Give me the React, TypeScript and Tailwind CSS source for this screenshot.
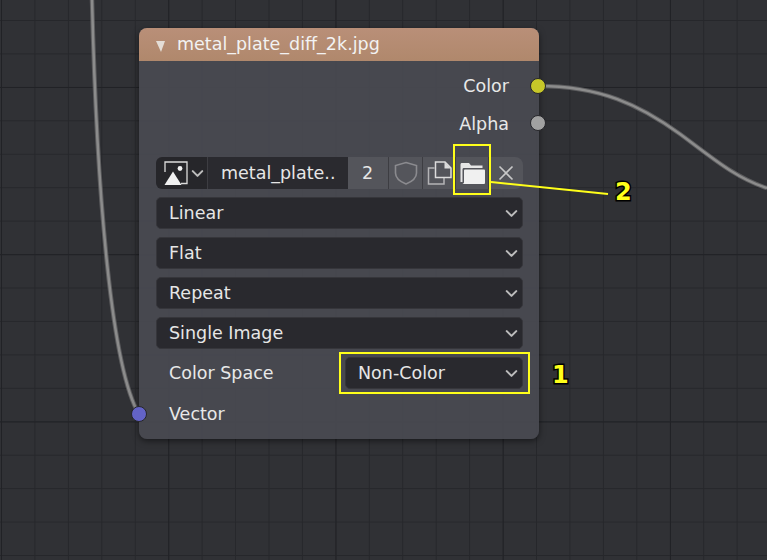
// Blender image texture node with annotation callouts

import { ChevronDown } from "lucide-react"

const selectRows = ["Linear", "Flat", "Repeat", "Single Image"]

function Chevron() {
  return <ChevronDown className="w-[19px] h-[19px] text-[#bdbdbd] shrink-0" strokeWidth={2.6} />
}

function SelectBox({ label }: { label: string }) {
  return (
    <div className="h-8 flex items-center justify-between pl-[12px] pr-[1px] bg-[#29292e] rounded-[5px] border border-[#36363b] text-[#e6e6e6]">
      <span className="pt-[2px]">{label}</span>
      <Chevron />
    </div>
  )
}

function ImageIcon() {
  return (
    <svg className="shrink-0" width="24" height="24" viewBox="0 0 24 24" fill="none">
      <path d="M1 11V1H23V22.5H17" stroke="#dcdcdc" strokeWidth="1.3" />
      <path d="M0.5 24L9 10.5L17.5 24Z" fill="#f0f0f0" />
      <circle cx="16" cy="7.5" r="2.4" fill="#f0f0f0" />
    </svg>
  )
}

function ShieldIcon() {
  return (
    <svg width="24" height="24" viewBox="0 0 24 24" fill="none">
      <path d="M12 1.5L22.5 4.5V12C22.5 17.5 17 21 12 23C7 21 1.5 17.5 1.5 12V4.5Z" stroke="#8b8b8f" strokeWidth="1.6" />
    </svg>
  )
}

function CopyIcon() {
  return (
    <svg width="25" height="24" viewBox="0 0 25 24" fill="none">
      <path d="M7.5 7H1.5V23H17V17" stroke="#b4b4b6" strokeWidth="1.5" />
      <path d="M8.5 1H18L24 7V16.5H8.5Z" stroke="#dcdcdc" strokeWidth="1.5" />
      <path d="M17.5 1V7.5H24Z" fill="#dcdcdc" />
    </svg>
  )
}

function FolderIcon() {
  return (
    <svg width="25" height="22" viewBox="0 0 25 22" fill="none">
      <path d="M0.5 3C0.5 1.5 1 1 2 1H9L11 3.5H22.5V6H4C3 6 2.5 6.5 2.5 7.5V20H0.5Z" fill="#e6e6e6" />
      <path d="M5 7.5H24C24.5 7.5 25 8 25 8.5V20.5C25 21.5 24.5 22 24 22H2.5C3.5 21.5 4 21 4 20V8.5C4 8 4.5 7.5 5 7.5Z" fill="#f0f0f0" />
    </svg>
  )
}

function CloseIcon() {
  return (
    <svg width="16" height="16" viewBox="0 0 16 16" fill="none">
      <path d="M1.5 1.5L14.5 14.5M14.5 1.5L1.5 14.5" stroke="#c8c8c8" strokeWidth="1.6" />
    </svg>
  )
}

function Socket({ className }: { className: string }) {
  return <span className={`absolute w-[16px] h-[16px] rounded-full border border-[#26262a] ${className}`} />
}

function Wire({ d }: { d: string }) {
  return (
    <>
      <path d={d} stroke="#6f6f71" strokeWidth="4.5" opacity="0.7" />
      <path d={d} stroke="#8c8c8c" strokeWidth="2.5" />
    </>
  )
}

export default function App() {
  return (
    <div
      className="relative w-[767px] h-[560px] overflow-hidden bg-[#303135] bg-[linear-gradient(#212226_1px,transparent_1px),linear-gradient(90deg,#212226_1px,transparent_1px),linear-gradient(#26272b_1px,transparent_1px),linear-gradient(90deg,#26272b_1px,transparent_1px)] bg-[size:167.25px_167.25px,167.25px_167.25px,33.45px_33.45px,33.45px_33.45px] bg-[position:1px_87px,1px_87px,1px_20px,1px_20px] text-[17.5px] leading-none"
      style={{ fontFamily: '"DejaVu Sans", sans-serif' }}
    >
      {/* Wires */}
      <svg className="absolute inset-0" width="767" height="560" fill="none">
        <Wire d="M92 0C97 200 112 370 139 414" />
        <Wire d="M538 86C600 86 640 105 680 134C710 156 735 178 767 188" />
      </svg>

      {/* Node */}
      <div className="absolute left-[139px] top-[28px] w-[400px] h-[411px] rounded-[8px] bg-[#484950]/[0.96] shadow-[0_2px_6px_rgba(0,0,0,0.5)] text-[#e8e8e8]">
        <div className="h-[33px] flex items-center gap-[12px] pl-[17px] rounded-t-[8px] bg-[linear-gradient(#b98f78,#b0886c)] text-[#f2f2f2]">
          <span className="w-0 h-0 mt-[3px] border-l-[5px] border-r-[4px] border-t-[11px] border-l-transparent border-r-transparent border-t-[#e4ddd6]" />
          <span className="pt-[1px]">metal_plate_diff_2k.jpg</span>
        </div>

        <div className="flex flex-col pl-[17px] pr-[16px]">
          <div className="h-[38px] mt-[6px] pt-[2px] pr-[14px] flex items-center justify-end">Color</div>
          <div className="h-[38px] pt-[2px] pr-[14px] flex items-center justify-end">Alpha</div>

          {/* Image selector */}
          <div className="h-8 mt-[14px] flex items-stretch text-[#e6e6e6]">
            <div className="w-[52px] shrink-0 flex items-center pl-[8px] gap-0 bg-[#26262a] rounded-l-[6px] border-r border-[#3d3d42]">
              <ImageIcon />
              <Chevron />
            </div>
            <div className="w-[140px] shrink-0 flex items-center pl-[13px] pt-[2px] bg-[#2a2a2f]">metal_plate..</div>
            <div className="w-[40px] shrink-0 flex items-center justify-center pt-[2px] pr-[1px] bg-[#54555b]">2</div>
            <div className="w-[34px] shrink-0 flex items-center justify-center bg-[#54555b] border-l border-[#3d3d42]"><ShieldIcon /></div>
            <div className="w-[33px] shrink-0 flex items-center justify-center bg-[#54555b] border-l border-[#3d3d42]"><CopyIcon /></div>
            <div className="w-[33px] shrink-0 flex items-center justify-center bg-[#54555b] border-l border-[#3d3d42]"><FolderIcon /></div>
            <div className="w-[35px] shrink-0 flex items-center justify-center bg-[#54555b] border-l border-[#3d3d42] rounded-r-[8px]"><CloseIcon /></div>
          </div>

          <div className="mt-2 flex flex-col gap-2">
            {selectRows.map((row) => (
              <SelectBox key={row} label={row} />
            ))}
          </div>

          <div className="mt-2 h-8 flex items-center justify-between">
            <span className="pl-[13px] pt-[2px]">Color Space</span>
            <div className="w-[178px]">
              <SelectBox label="Non-Color" />
            </div>
          </div>

          <div className="h-[49px] pl-[13px] pt-[2px] flex items-center">Vector</div>
        </div>
      </div>

      <Socket className="left-[530px] top-[78px] bg-[#c7c729]" />
      <Socket className="left-[530px] top-[115px] bg-[#a1a1a1]" />
      <Socket className="left-[131px] top-[406px] bg-[#6363c7]" />

      {/* Annotations */}
      <svg className="absolute inset-0" width="767" height="560" fill="none">
        <path d="M491 182L608 194" stroke="#ffff1a" strokeWidth="2" />
      </svg>
      <div className="absolute left-[453px] top-[144px] w-[38px] h-[51px] border-2 border-[#ffff1a]" />
      <div className="absolute left-[339px] top-[352px] w-[191px] h-[42px] border-2 border-[#ffff1a]" />
      <span className="absolute left-[615px] top-[180px] text-[24px] font-bold text-[#ffff1a] [-webkit-text-stroke:3px_#000] [paint-order:stroke_fill]">2</span>
      <span className="absolute left-[552px] top-[363px] text-[24px] font-bold text-[#ffff1a] [-webkit-text-stroke:3px_#000] [paint-order:stroke_fill]">1</span>
    </div>
  )
}
